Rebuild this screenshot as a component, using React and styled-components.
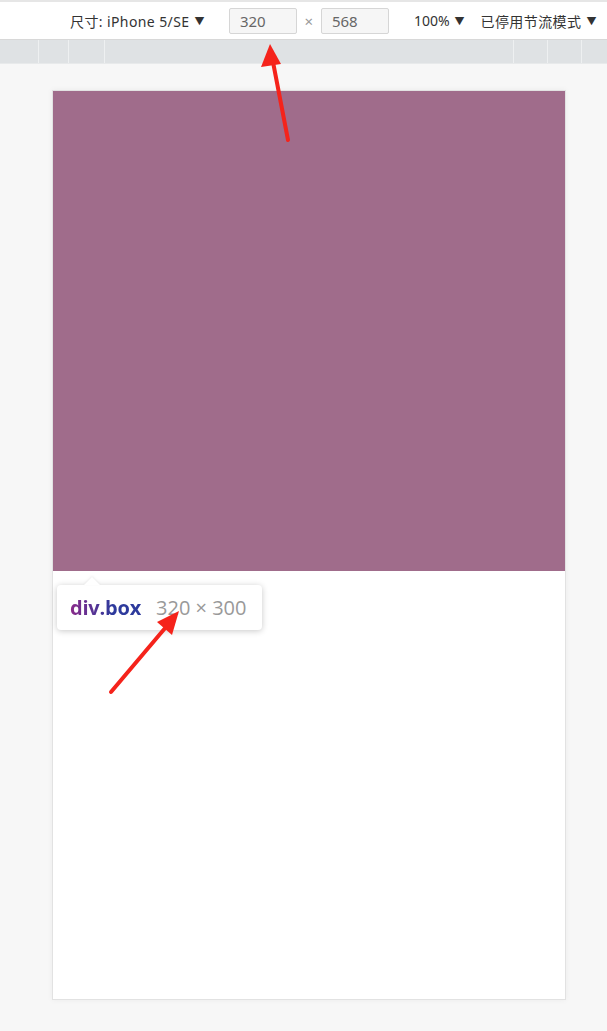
import React from 'react'
import styled, { createGlobalStyle } from 'styled-components'

const GlobalStyle = createGlobalStyle`
  html, body {
    margin: 0;
    padding: 0;
    background: #f7f7f7;
    font-family: "Noto Sans", "Noto Sans CJK SC", sans-serif;
  }
`;

const App = () => {
  return (
    <Page>
      <GlobalStyle />
      <Toolbar>
        <Label>尺寸: iPhone 5/SE<Caret>▼</Caret></Label>
        <SizeInput first>320</SizeInput>
        <Times>×</Times>
        <SizeInput>568</SizeInput>
        <Zoom>100%<Caret>▼</Caret></Zoom>
        <Label>已停用节流模式<Caret>▼</Caret></Label>
      </Toolbar>
      <Ruler>
        <Tick left={38} />
        <Tick left={68} />
        <Tick left={104} />
        <Tick left={513} />
        <Tick left={547} />
        <Tick left={581} />
      </Ruler>
      <Stage>
        <Device>
          <Box />
          <Tip>
            <TipName>div.box</TipName>
            <TipSize>320 × 300</TipSize>
          </Tip>
        </Device>
      </Stage>
      <Arrows width="607" height="1031" viewBox="0 0 607 1031">
        <line x1="288" y1="140" x2="273" y2="62" stroke="#f5231b" strokeWidth="4" strokeLinecap="round" />
        <polygon points="270,44 261,67 281,64" fill="#f5231b" />
        <line x1="111" y1="692" x2="166" y2="627" stroke="#f5231b" strokeWidth="4" strokeLinecap="round" />
        <polygon points="179,611 157,622 172,635" fill="#f5231b" />
      </Arrows>
    </Page>
  );
}

const Page = styled.div`
  position: relative;
  width: 607px;
  height: 1031px;
  overflow: hidden;
  background: #f7f7f7;
`;

const Toolbar = styled.div`
  height: 40px;
  box-sizing: border-box;
  border-top: 2px solid #e6e6e6;
  background: #ffffff;
  display: flex;
  align-items: center;
  padding-left: 70px;
  white-space: nowrap;
  border-bottom: 1px solid #d8d8d8;
`;

const Label = styled.span`
  font-size: 14px;
  letter-spacing: 0.4px;
  color: #333;
  display: flex;
  align-items: center;
`;

const Caret = styled.span`
  font-size: 10px;
  margin-left: 5px;
  color: #333;
`;

const SizeInput = styled.div`
  width: 68px;
  height: 26px;
  box-sizing: border-box;
  border: 1px solid #d6d6d6;
  border-radius: 2px;
  background: #f6f6f6;
  font-size: 15px;
  color: #666;
  padding-left: 10px;
  line-height: 24px;
  margin-left: ${p => (p.first ? '24px' : '0')};
`;

const Times = styled.span`
  width: 24px;
  text-align: center;
  font-size: 15px;
  color: #999;
`;

const Zoom = styled.span`
  font-size: 14px;
  color: #333;
  margin-left: 25px;
  margin-right: 16px;
  display: flex;
  align-items: center;
`;

const Ruler = styled.div`
  position: relative;
  height: 23px;
  background: #dfe2e4;
  border-bottom: 1px solid #e8eaeb;
`;

const Tick = styled.div`
  position: absolute;
  top: 0;
  bottom: 0;
  left: ${p => p.left}px;
  width: 1px;
  background: #eef0f1;
`;

const Stage = styled.div`
  padding: 26px 0 0 52px;
`;

const Device = styled.div`
  position: relative;
  width: 512px;
  height: 908px;
  background: #ffffff;
  border: 1px solid #e2e2e2;
  box-shadow: 0 0 6px rgba(0, 0, 0, 0.05);
`;

const Box = styled.div`
  height: 480px;
  background: #a06c8b;
`;

const Tip = styled.div`
  position: absolute;
  left: 4px;
  top: 494px;
  height: 45px;
  padding: 0 15px 0 13px;
  display: flex;
  align-items: center;
  gap: 15px;
  background: #fff;
  border-radius: 4px;
  box-shadow: 0 1px 6px rgba(0, 0, 0, 0.22);
  &::before {
    content: '';
    position: absolute;
    left: 27px;
    top: -8px;
    border-left: 8px solid transparent;
    border-right: 8px solid transparent;
    border-bottom: 8px solid #fff;
    filter: drop-shadow(0 -1px 1px rgba(0, 0, 0, 0.08));
  }
`;

const TipName = styled.span`
  font-family: "Open Sans", sans-serif;
  font-size: 20px;
  font-weight: 700;
  letter-spacing: -0.2px;
  background: linear-gradient(90deg, #8a2a8a, #2d3a9c 60%);
  -webkit-background-clip: text;
  background-clip: text;
  color: transparent;
`;

const TipSize = styled.span`
  font-family: "Open Sans", sans-serif;
  font-size: 20px;
  color: #999;
`;

const Arrows = styled.svg`
  position: absolute;
  left: 0;
  top: 0;
  pointer-events: none;
`;

export default App
